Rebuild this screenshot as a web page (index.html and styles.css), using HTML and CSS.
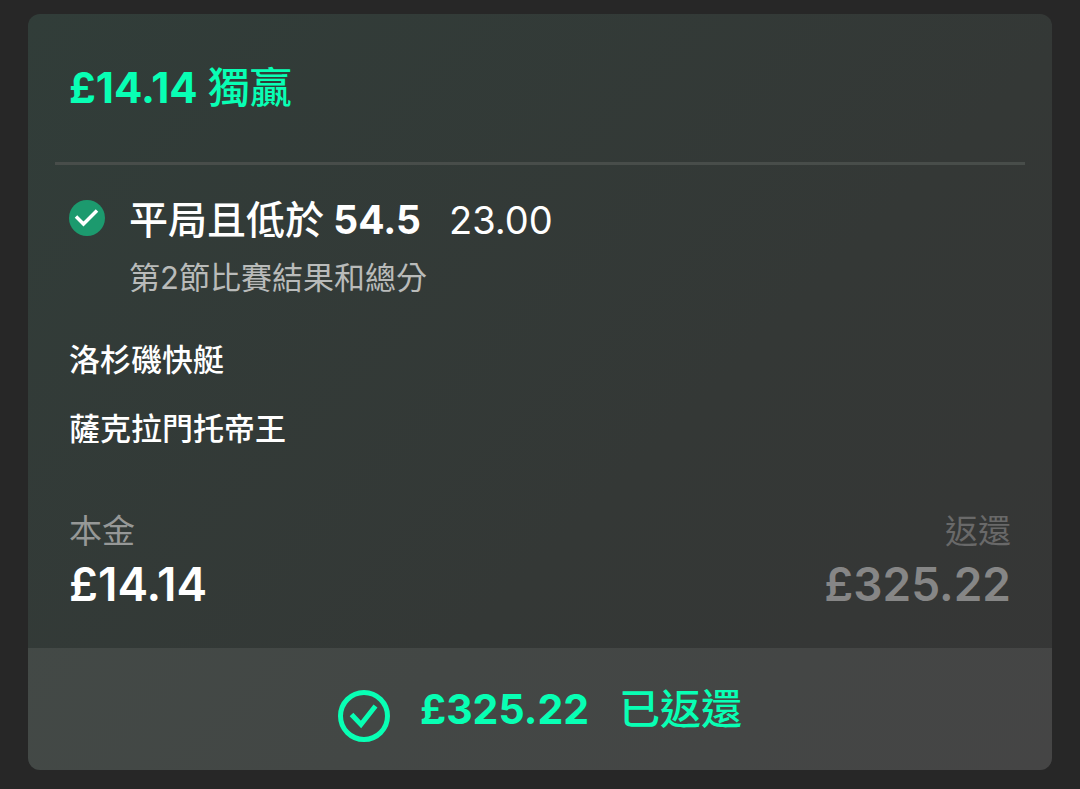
FILE: index.html
```html
<!DOCTYPE html>
<html lang="zh-Hant">
<head>
<meta charset="utf-8">
<meta name="viewport" content="width=device-width, initial-scale=1">
<title>£14.14 獨贏</title>
<link rel="stylesheet" href="styles.css">
</head>
<body>
<main class="bet-card">
  <div class="bet-body">
    <header class="bet-header">
      <h1 class="bet-title">£14.14 <span class="cjk">獨贏</span></h1>
    </header>
    <section class="selection">
      <svg class="selection-icon" viewBox="0 0 36 36" aria-hidden="true">
        <circle cx="18" cy="18" r="18" fill="#1c9a6e"/>
        <path d="M7 16.500l7.500 7.500L28 10.500" fill="none" stroke="#fff" stroke-width="3.500"/>
      </svg>
      <div class="selection-text">
        <div class="selection-line">
          <h2 class="selection-name"><span class="cjk">平局且低於</span> 54.5</h2>
          <span class="selection-odds">23.00</span>
        </div>
        <p class="market">第2節比賽結果和總分</p>
      </div>
    </section>
    <ul class="teams cjk">
      <li>洛杉磯快艇</li>
      <li>薩克拉門托帝王</li>
    </ul>
    <dl class="totals">
      <div class="total">
        <dt>本金</dt>
        <dd>£14.14</dd>
      </div>
      <div class="total total-return">
        <dt>返還</dt>
        <dd>£325.22</dd>
      </div>
    </dl>
  </div>
  <footer class="returned">
    <svg class="returned-icon" viewBox="0 0 52 52" aria-hidden="true">
      <circle cx="26" cy="26" r="23.500" fill="none" stroke="#08ffb4" stroke-width="5"/>
      <path d="M13.500 24.500l9.500 10L37.500 16" fill="none" stroke="#08ffb4" stroke-width="5"/>
    </svg>
    <strong class="returned-amount">£325.22</strong>
    <strong class="cjk">已返還</strong>
  </footer>
</main>
</body>
</html>
```
FILE: styles.css
```css
* { box-sizing: border-box; margin: 0; padding: 0; }
body {
  padding: 14px 28px 19px;
  background: #272727;
  color: #fff;
  font-family: Inter, "Noto Sans CJK TC", sans-serif;
}
.bet-card {
  overflow: hidden;
  border-radius: 12px;
  background: linear-gradient(135deg, #313d39 0%, #343836 60%, #363636 100%);
}
.cjk { font-weight: 500; }
.bet-body { padding: 0 27px 34px; }
.bet-header {
  padding: 44px 14px;
  border-bottom: 3px solid #484d4a;
}
.bet-title {
  color: #08ffb4;
  font-size: 42px;
  line-height: 60px;
  font-weight: 700;
}
.selection { display: flex; gap: 24px; padding: 35px 14px 0; }
.selection-icon { flex: none; width: 36px; height: 36px; }
.selection-line { display: flex; align-items: baseline; gap: 28px; }
.selection-name, .selection-odds { font-size: 39px; line-height: 40px; }
.selection-name { font-weight: 700; }
.selection-odds { font-size: 38px; }
.market { margin-top: 18px; color: #b9bbba; font-size: 31px; line-height: 40px; }
.teams { padding: 42px 14px 0; list-style: none; }
.teams li { font-size: 31px; line-height: 40px; }
.teams li + li { margin-top: 29px; }
.totals { display: flex; justify-content: space-between; padding: 60px 14px 0; }
.total dt { color: #969897; font-size: 33px; line-height: 45px; }
.total dd { font-size: 46px; line-height: 60px; font-weight: 600; }
.total-return { text-align: right; }
.total-return dt { color: #696969; }
.total-return dd { color: #868686; }
.returned {
  display: flex;
  align-items: flex-end;
  justify-content: center;
  gap: 30px;
  padding: 28px;
  background: rgba(255, 255, 255, .08);
  color: #08ffb4;
  font-size: 41px;
  line-height: 66px;
}
.returned-icon { width: 52px; height: 52px; }
.returned-amount { font-weight: 700; }
```
